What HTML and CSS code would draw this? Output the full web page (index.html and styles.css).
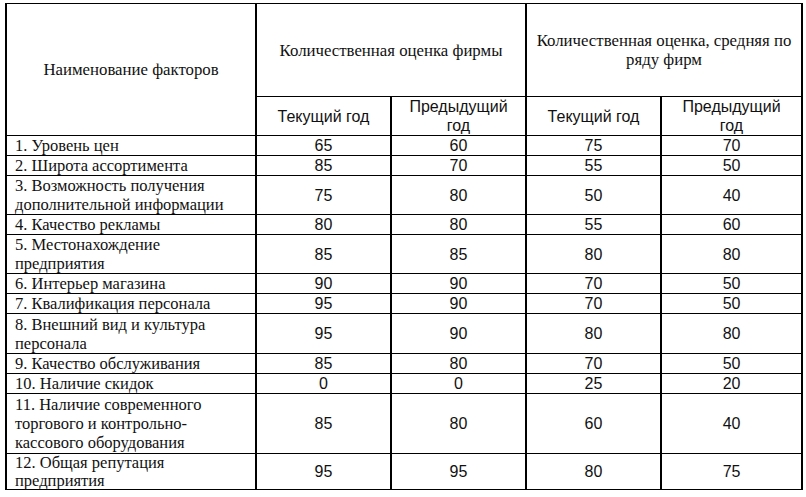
FILE: index.html
```html
<!DOCTYPE html>
<html lang="ru">
<head>
<meta charset="utf-8">
<link rel="stylesheet" href="styles.css">
</head>
<body>
<table class="grid">
  <colgroup>
    <col class="c-name">
    <col class="c-val">
    <col class="c-val">
    <col class="c-val">
    <col class="c-last">
  </colgroup>
  <thead>
    <tr class="h1">
      <th rowspan="2" class="hd-serif">Наименование факторов</th>
      <th colspan="2" class="hd-serif">Количественная оценка фирмы</th>
      <th colspan="2" class="hd-serif hd-avg">Количественная оценка, средняя по<br>ряду фирм</th>
    </tr>
    <tr class="h2">
      <th class="hd-sans">Текущий год</th>
      <th class="hd-sans">Предыдущий<br>год</th>
      <th class="hd-sans">Текущий год</th>
      <th class="hd-sans">Предыдущий<br>год</th>
    </tr>
  </thead>
  <tbody>
    <tr class="r1"><td class="name">1. Уровень цен</td><td>65</td><td>60</td><td>75</td><td>70</td></tr>
    <tr class="r1"><td class="name">2. Широта ассортимента</td><td>85</td><td>70</td><td>55</td><td>50</td></tr>
    <tr class="r2"><td class="name">3. Возможность получения<br>дополнительной информации</td><td>75</td><td>80</td><td>50</td><td>40</td></tr>
    <tr class="r1"><td class="name">4. Качество рекламы</td><td>80</td><td>80</td><td>55</td><td>60</td></tr>
    <tr class="r2"><td class="name">5. Местонахождение<br>предприятия</td><td>85</td><td>85</td><td>80</td><td>80</td></tr>
    <tr class="r1"><td class="name">6. Интерьер магазина</td><td>90</td><td>90</td><td>70</td><td>50</td></tr>
    <tr class="r1"><td class="name">7. Квалификация персонала</td><td>95</td><td>90</td><td>70</td><td>50</td></tr>
    <tr class="r2b"><td class="name">8. Внешний вид и культура<br>персонала</td><td>95</td><td>90</td><td>80</td><td>80</td></tr>
    <tr class="r1"><td class="name">9. Качество обслуживания</td><td>85</td><td>80</td><td>70</td><td>50</td></tr>
    <tr class="r1"><td class="name">10. Наличие скидок</td><td>0</td><td>0</td><td>25</td><td>20</td></tr>
    <tr class="r3"><td class="name">11. Наличие современного<br>торгового и контрольно-<br>кассового оборудования</td><td>85</td><td>80</td><td>60</td><td>40</td></tr>
    <tr class="r4"><td class="name name-tight">12. Общая репутация<br>предприятия</td><td>95</td><td>95</td><td>80</td><td>75</td></tr>
  </tbody>
</table>
</body>
</html>
```

FILE: styles.css
```css
html, body {
  background: #fff;
}
body {
  margin: 0;
  padding: 3px 0 0 5px;
}
.grid {
  border-collapse: collapse;
  table-layout: fixed;
  width: 796px;
  color: #111;
}
.c-name { width: 250px; }
.c-val { width: 135px; }
.c-last { width: 141px; }

.grid th,
.grid td {
  border-top: 1px solid #000;
  border-bottom: 1px solid #000;
  border-left: 2px solid #000;
  border-right: 2px solid #000;
  padding: 0;
  text-align: center;
  vertical-align: middle;
  font-weight: normal;
}
.hd-serif {
  font-family: "Liberation Serif", "Times New Roman", serif;
  font-size: 16.8px;
  line-height: 19px;
}
.hd-avg {
  padding-bottom: 4px;
}
.hd-sans {
  font-family: "Liberation Sans", Arial, sans-serif;
  font-size: 16px;
  line-height: 19px;
}
.grid td {
  font-family: "Liberation Sans", Arial, sans-serif;
  font-size: 16px;
  line-height: 19px;
}
.grid td.name {
  font-family: "Liberation Serif", "Times New Roman", serif;
  font-size: 16.5px;
  line-height: 19px;
  text-align: left;
  padding-left: 8px;
}
.grid td.name-tight {
  line-height: 17.5px;
}
.h1 { height: 93px; }
.h2 { height: 39px; }
.r1 { height: 20px; }
.r2 { height: 39px; }
.r2b { height: 40px; }
.r3 { height: 60px; }
.r4 { height: 36px; }
```
